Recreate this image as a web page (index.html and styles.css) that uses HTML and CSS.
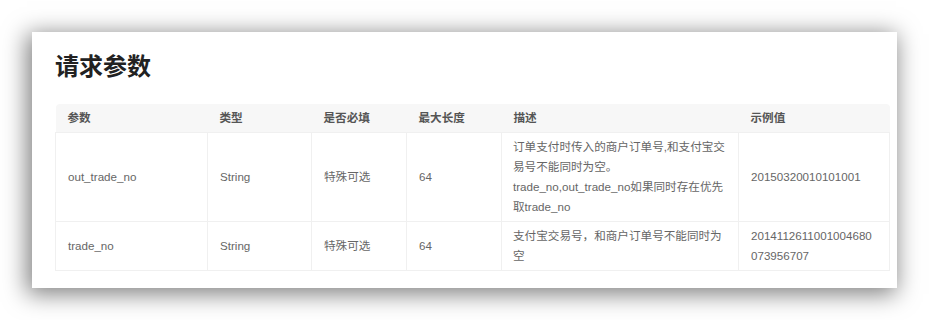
FILE: index.html
```html
<!DOCTYPE html>
<html lang="zh-CN">
<head>
<meta charset="utf-8">
<title>请求参数</title>
<link rel="stylesheet" href="styles.css">
</head>
<body>
<section class="card">
  <h2 class="title">请求参数</h2>
  <table class="params">
    <colgroup>
      <col class="c-name"><col class="c-type"><col class="c-req"><col class="c-len"><col class="c-desc"><col class="c-ex">
    </colgroup>
    <thead>
      <tr><th>参数</th><th>类型</th><th>是否必填</th><th>最大长度</th><th>描述</th><th>示例值</th></tr>
    </thead>
    <tbody>
      <tr>
        <td>out_trade_no</td>
        <td>String</td>
        <td>特殊可选</td>
        <td>64</td>
        <td>订单支付时传入的商户订单号,和支付宝交易号不能同时为空。<br>trade_no,out_trade_no如果同时存在优先取trade_no</td>
        <td>20150320010101001</td>
      </tr>
      <tr>
        <td>trade_no</td>
        <td>String</td>
        <td>特殊可选</td>
        <td>64</td>
        <td>支付宝交易号，和商户订单号不能同时为空</td>
        <td>2014112611001004680073956707</td>
      </tr>
    </tbody>
  </table>
</section>
</body>
</html>
```

FILE: styles.css
```css
html, body {
  margin: 0;
  padding: 0;
  background: #ffffff;
}
body {
  box-sizing: border-box;
  min-height: 320px;
  padding: 32px 32px 32px 32px;
  font-family: "Liberation Sans", "Noto Sans CJK SC", sans-serif;
}
.card {
  width: 865px;
  height: 256px;
  box-sizing: border-box;
  background: #ffffff;
  padding: 21px 8px 0 23px;
  box-shadow: -3px 4px 22px 2px rgba(0, 0, 0, 0.5);
}
.title {
  margin: 0 0 27px 0;
  font-size: 24px;
  line-height: 24px;
  font-weight: bold;
  color: #222;
  font-family: "Noto Sans CJK SC", "Liberation Sans", sans-serif;
}
.params {
  width: 834px;
  table-layout: fixed;
  border-collapse: collapse;
  font-size: 11.6px;
  line-height: 20px;
  color: #666;
}
.c-name { width: 152px; }
.c-type { width: 104px; }
.c-req { width: 95px; }
.c-len { width: 95px; }
.c-desc { width: 237px; }
.c-ex { width: 151px; }
.params th {
  background: #f7f7f7;
  color: #555;
  font-weight: bold;
  text-align: left;
  padding: 4px 12px;
  height: 20px;
}
.params th:first-child { border-top-left-radius: 4px; }
.params th:last-child { border-top-right-radius: 4px; }
.params td {
  border: 1px solid #f0f0f0;
  padding: 4px 11px 4px 12px;
  vertical-align: middle;
  word-break: break-all;
}
.params td:nth-child(5) { padding-left: 11px; }
```
